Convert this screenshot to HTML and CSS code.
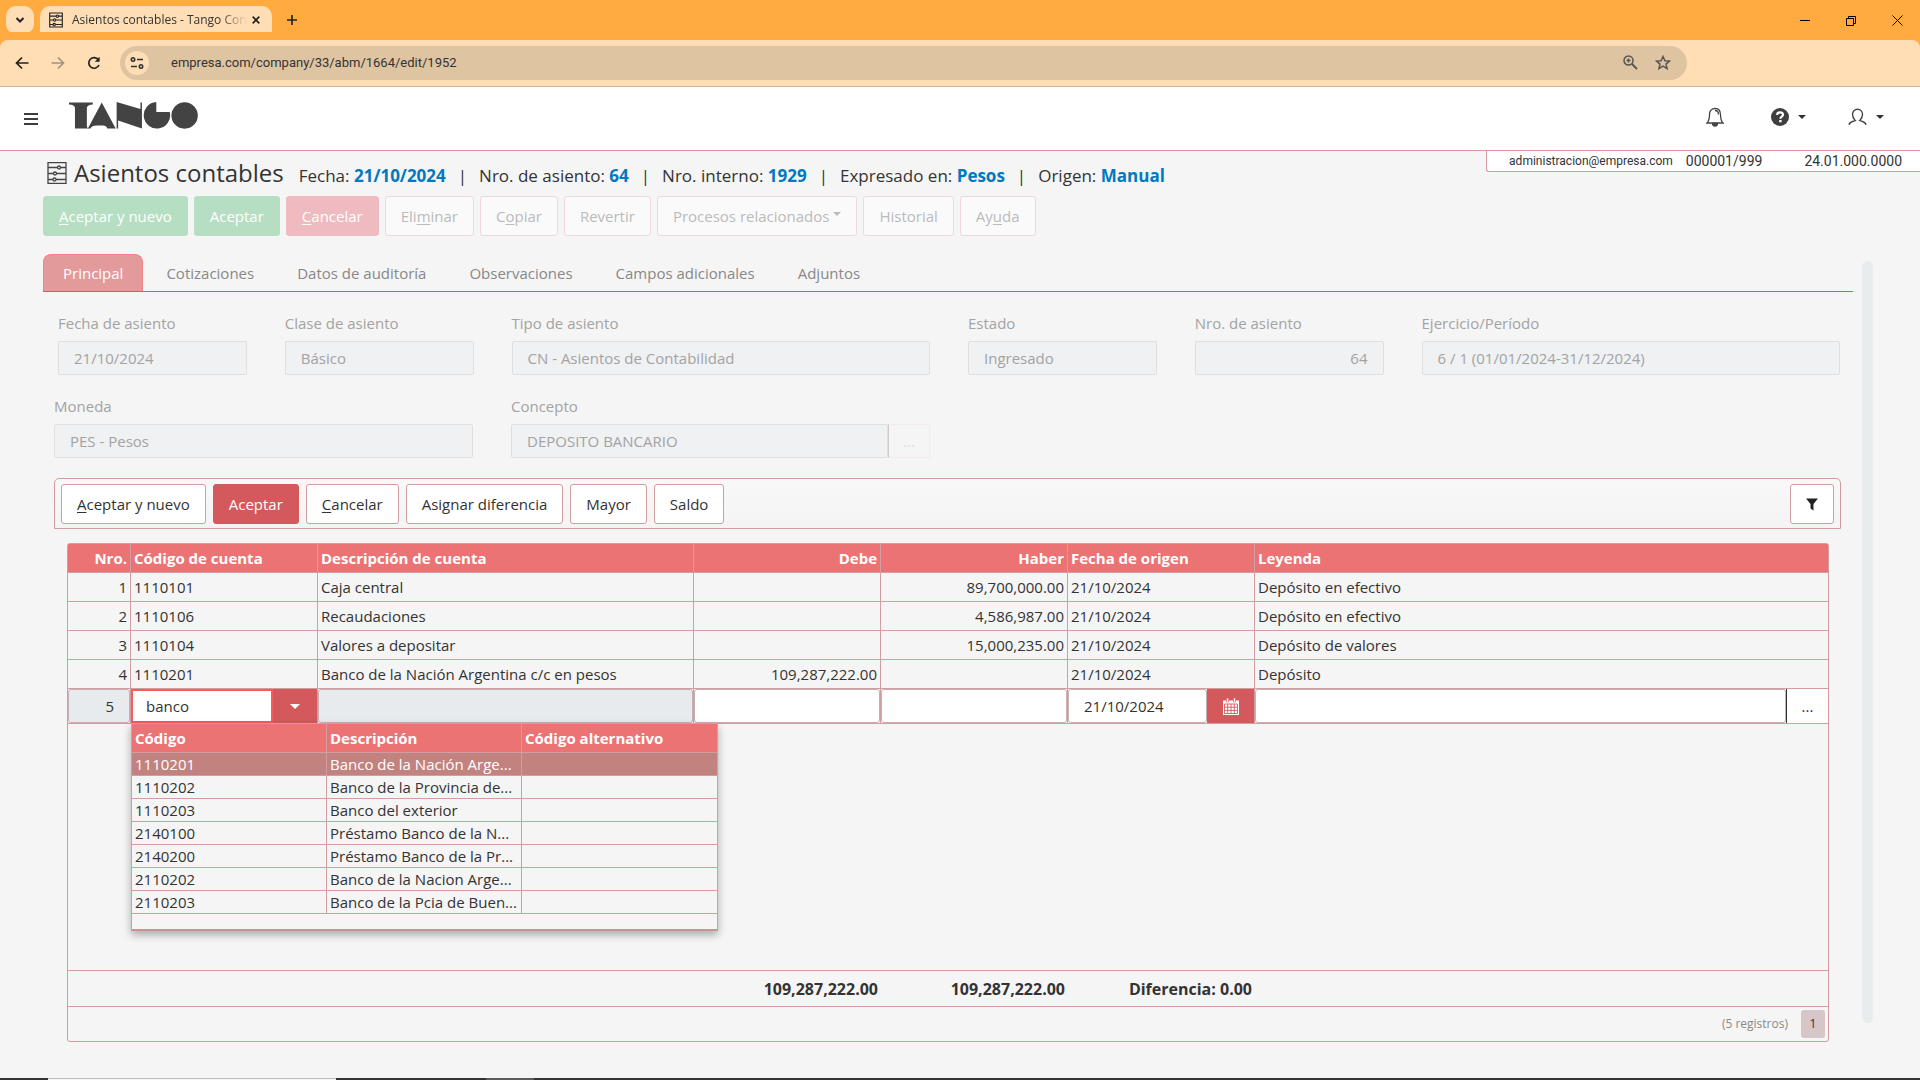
FILE: index.html
```html
<!doctype html>
<html lang="es">
<head>
    <meta charset="UTF-8">
    <meta name="viewport" content="width=device-width, initial-scale=1.0">
    <title>Asientos contables - Tango Contabilidad</title>
    <link rel="stylesheet" href="styles.css">
</head>
<body>
    <!-- browser frame -->
    <div class="tabstrip">
        <button class="tab-search" aria-label="Buscar pestañas">
            <svg width="10" height="10" viewBox="0 0 10 10"><path d="M1.5 3 5 6.5 8.5 3" fill="none" stroke="#222" stroke-width="2"/></svg>
        </button>
        <div class="browser-tab">
            <svg class="tab-icon" width="14" height="16" viewBox="0 0 20 22"><g fill="none" stroke="#222" stroke-width="1.6"><path d="M1 1h18v20H1zM1 5.500h18M1 11h18M1 17.500h18"/><g fill="#ffdeb5"><circle cx="12" cy="5.500" r="1.700"/><circle cx="8" cy="11" r="1.700"/><circle cx="7.500" cy="17.500" r="1.700"/></g></g></svg>
            <span class="tab-title">Asientos contables - Tango Con</span>
            <button class="tab-close" aria-label="Cerrar pestaña">
                <svg width="8" height="8" viewBox="0 0 8 8"><path d="M.7.7l6.600 6.600M7.300.7.7 7.300" stroke="#222" stroke-width="1.700"/></svg>
            </button>
        </div>
        <button class="new-tab" aria-label="Nueva pestaña">
            <svg width="12" height="12" viewBox="0 0 12 12"><path d="M6 1v10M1 6h10" stroke="#222" stroke-width="1.700"/></svg>
        </button>
        <div class="window-buttons">
            <button aria-label="Minimizar"><svg width="10" height="11" viewBox="0 0 10 11"><path d="M0 5.500h10" stroke="#000"/></svg></button>
            <button aria-label="Restaurar"><svg width="10" height="11" viewBox="0 0 10 11"><path d="M.5 3.500h7v7h-7zM2.500 3.500v-2h7v7h-2" fill="none" stroke="#000"/></svg></button>
            <button aria-label="Cerrar"><svg width="11" height="11" viewBox="0 0 11 11"><path d="M.5.5l10 10M10.500.5l-10 10" stroke="#000"/></svg></button>
        </div>
    </div>
    <div class="browser-bar">
        <button aria-label="Atrás"><svg width="14" height="14" viewBox="0 0 14 14"><path d="M13.500 7H2M7 1.500 1.500 7 7 12.500" fill="none" stroke="#222" stroke-width="1.700"/></svg></button>
        <button aria-label="Adelante"><svg width="14" height="14" viewBox="0 0 14 14"><path d="M.5 7H12M7 1.500 12.500 7 7 12.500" fill="none" stroke="#a4927c" stroke-width="1.700"/></svg></button>
        <button aria-label="Recargar"><svg width="14" height="14" viewBox="0 0 14 14"><path d="M12 9a5.300 5.300 0 1 1-.6-5.200" fill="none" stroke="#222" stroke-width="1.700"/><path d="M12.600.8v5H7.800z" fill="#222"/></svg></button>
        <div class="omnibox">
            <button class="site-info" aria-label="Información del sitio">
                <svg width="14" height="14" viewBox="0 0 14 14" fill="none" stroke="#333" stroke-width="1.600"><circle cx="3" cy="3.500" r="1.700"/><path d="M7 3.500h6M1 10.500h6"/><circle cx="11" cy="10.500" r="1.700"/></svg>
            </button>
            <input class="url" type="text" aria-label="Dirección" value="empresa.com/company/33/abm/1664/edit/1952">
            <button aria-label="Zoom"><svg width="15" height="15" viewBox="0 0 15 15" fill="none" stroke="#555"><circle cx="5.500" cy="5.500" r="4.500" stroke-width="1.500"/><path d="M9 9l5 5" stroke-width="1.800"/><path d="M5.500 3.500v4M3.500 5.500h4" stroke-width="1.500"/></svg></button>
            <button aria-label="Favorito"><svg width="16" height="15" viewBox="0 0 16 15"><path d="M8 1.500l1.900 4.200 4.600.4-3.500 3 1.100 4.500L8 11.200l-4.100 2.400L5 9.100 1.500 6.100l4.600-.4z" fill="none" stroke="#555" stroke-width="1.500"/></svg></button>
        </div>
    </div>

    <header class="app-header">
        <button class="menu" aria-label="Menú">
            <svg width="14" height="12" viewBox="0 0 14 12"><path d="M0 1h14M0 6h14M0 11h14" stroke="#3c3c3c" stroke-width="2"/></svg>
        </button>
        <!-- Tango logo -->
        <svg class="logo" role="img" aria-label="Tango" width="129" height="27" viewBox="0 0 130 27" fill="#434343">
            <path d="M0 .5h24v2q-5 0-6 3v18q0 2.500 1.500 3H6V5.500Q5 2.500 0 2.500z"/>
            <path d="M33 .5l14 26H38.500Q38 23.500 34 23.500h-6q-5 0-6.500 3H19z"/>
            <path d="M48 0l24 7V.5h1.500v26L49.500 18.500v8H48z"/>
            <path d="M88 0v10h13.500A13.300 13.300 0 1 1 88 0z"/>
            <circle cx="116.500" cy="13.500" r="13.300"/>
        </svg>
        <nav class="header-icons">
            <button aria-label="Notificaciones">
                <svg width="18" height="20" viewBox="0 0 18 20" fill="none" stroke="#444" stroke-width="1.300"><path d="M1 16c2-2 2.500-4 2.500-8.500C3.500 3.500 6 1.500 9 1.500s5.500 2 5.500 6c0 4.500.5 6.500 2.500 8.500z"/><path d="M9 3.500c2 0 3.500 1.200 3.500 4"/><path d="M6.500 16.500a2.500 2.500 0 0 0 5 0z" fill="#444"/></svg>
            </button>
            <button aria-label="Ayuda">
                <svg width="18" height="18" viewBox="0 0 18 18"><circle cx="9" cy="9" r="9" fill="#3f3f3f"/><path d="M6 6.800C6.200 5 7.400 4.300 9 4.300c1.800 0 3 .9 3 2.400 0 2-2.600 1.900-2.600 4" fill="none" stroke="#fff" stroke-width="2.200"/><rect x="8.200" y="12" width="2.400" height="2.300" fill="#fff"/></svg>
                <span class="caret"></span>
            </button>
            <button aria-label="Usuario">
                <svg width="19" height="18" viewBox="0 0 19 18"><path d="M1 16.800c.5-2.300 2-3.100 6.200-4.300C5 10.500 4.500 9 4.500 6.500 4.500 3.300 6.700 1.200 9.500 1.200s5 2.100 5 5.300c0 2.500-.5 4-2.700 6 4.200 1.200 5.700 2 6.200 4.300" fill="none" stroke="#444" stroke-width="1.400"/></svg>
                <span class="caret"></span>
            </button>
        </nav>
    </header>

    <main class="page">
        <div class="session">
            <span>administracion@empresa.com</span>
            <span class="company">000001/999</span>
            <span class="version">24.01.000.0000</span>
        </div>

        <div class="title-row">
            <svg width="20" height="22" viewBox="0 0 20 22"><g fill="none" stroke="#444" stroke-width="1.300"><path d="M1 .7h18v20.600H1zM1 5.500h18M1 11.500h18M1 17.500h18"/><g fill="#f5f5f5"><circle cx="12" cy="5.500" r="1.500"/><circle cx="8" cy="11.500" r="1.500"/><circle cx="7.500" cy="17.500" r="1.500"/></g></g></svg>
            <h1>Asientos contables</h1>
            <p class="info">
                <span>Fecha: <b>21/10/2024</b></span><i>|</i>
                <span>Nro. de asiento: <b>64</b></span><i>|</i>
                <span>Nro. interno: <b>1929</b></span><i>|</i>
                <span>Expresado en: <b>Pesos</b></span><i>|</i>
                <span>Origen: <b>Manual</b></span>
            </p>
        </div>

        <div class="actions">
            <button class="btn green" disabled><u>A</u>ceptar y nuevo</button>
            <button class="btn green" disabled>Aceptar</button>
            <button class="btn pink" disabled><u>C</u>ancelar</button>
            <button class="btn" disabled>Eli<u>m</u>inar</button>
            <button class="btn" disabled>C<u>o</u>piar</button>
            <button class="btn" disabled>Revertir</button>
            <button class="btn" disabled>Procesos relacionados<span class="caret"></span></button>
            <button class="btn" disabled>Historial</button>
            <button class="btn" disabled>Ay<u>u</u>da</button>
        </div>

        <div class="content">
            <div class="tabs">
                <a class="active" href="#">Principal</a>
                <a href="#">Cotizaciones</a>
                <a href="#">Datos de auditoría</a>
                <a href="#">Observaciones</a>
                <a href="#">Campos adicionales</a>
                <a href="#">Adjuntos</a>
            </div>

            <form class="fields">
                <div class="row">
                    <div class="field"><label for="fecha">Fecha de asiento</label><input id="fecha" type="text" value="21/10/2024" disabled></div>
                    <div class="field"><label for="clase">Clase de asiento</label><input id="clase" type="text" value="Básico" disabled></div>
                    <div class="field"><label for="tipo">Tipo de asiento</label><input id="tipo" type="text" value="CN - Asientos de Contabilidad" disabled></div>
                    <div class="field"><label for="estado">Estado</label><input id="estado" type="text" value="Ingresado" disabled></div>
                    <div class="field"><label for="nro">Nro. de asiento</label><input id="nro" class="num" type="text" value="64" disabled></div>
                    <div class="field"><label for="ejercicio">Ejercicio/Período</label><input id="ejercicio" type="text" value="6 / 1 (01/01/2024-31/12/2024)" disabled></div>
                </div>
                <div class="row second">
                    <div class="field"><label for="moneda">Moneda</label><input id="moneda" type="text" value="PES - Pesos" disabled></div>
                    <div class="field">
                        <label for="concepto">Concepto</label>
                        <div class="input-group">
                            <input id="concepto" type="text" value="DEPOSITO BANCARIO" disabled>
                            <button type="button" disabled>...</button>
                        </div>
                    </div>
                </div>
            </form>

            <div class="grid-toolbar">
                <button class="btn"><u>A</u>ceptar y nuevo</button>
                <button class="btn red">Aceptar</button>
                <button class="btn"><u>C</u>ancelar</button>
                <button class="btn">Asignar diferencia</button>
                <button class="btn">Mayor</button>
                <button class="btn">Saldo</button>
                <button class="btn filter" aria-label="Filtrar">
                    <svg width="12" height="13" viewBox="0 0 12 13"><path d="M0 .5h12L7.500 6v6.500l-3-2V6z" fill="#222"/></svg>
                </button>
            </div>

            <div class="grid">
                <table class="entries">
                    <colgroup>
                        <col class="c-nro"><col class="c-mid"><col class="c-desc"><col class="c-mid"><col class="c-mid"><col class="c-mid"><col>
                    </colgroup>
                    <thead>
                        <tr>
                            <th class="num">Nro.</th>
                            <th>Código de cuenta</th>
                            <th>Descripción de cuenta</th>
                            <th class="num">Debe</th>
                            <th class="num">Haber</th>
                            <th>Fecha de origen</th>
                            <th>Leyenda</th>
                        </tr>
                    </thead>
                    <tbody>
                        <tr><td class="num">1</td><td>1110101</td><td>Caja central</td><td class="num"></td><td class="num">89,700,000.00</td><td>21/10/2024</td><td>Depósito en efectivo</td></tr>
                        <tr><td class="num">2</td><td>1110106</td><td>Recaudaciones</td><td class="num"></td><td class="num">4,586,987.00</td><td>21/10/2024</td><td>Depósito en efectivo</td></tr>
                        <tr><td class="num">3</td><td>1110104</td><td>Valores a depositar</td><td class="num"></td><td class="num">15,000,235.00</td><td>21/10/2024</td><td>Depósito de valores</td></tr>
                        <tr><td class="num">4</td><td>1110201</td><td>Banco de la Nación Argentina c/c en pesos</td><td class="num">109,287,222.00</td><td class="num"></td><td>21/10/2024</td><td>Depósito</td></tr>
                        <tr class="edit">
                            <td><input class="line-number" type="text" aria-label="Nro." value="5" disabled></td>
                            <td class="lookup">
                                <div class="editor">
                                    <input class="focused" type="text" aria-label="Código de cuenta" value="banco">
                                    <button class="pick" aria-label="Abrir lista"><span class="caret"></span></button>
                                </div>
                                <div class="dropdown">
                                    <table>
                                        <thead>
                                            <tr><th>Código</th><th>Descripción</th><th>Código alternativo</th></tr>
                                        </thead>
                                        <tbody>
                                            <tr class="selected"><td>1110201</td><td>Banco de la Nación Arge...</td><td></td></tr>
                                            <tr><td>1110202</td><td>Banco de la Provincia de...</td><td></td></tr>
                                            <tr><td>1110203</td><td>Banco del exterior</td><td></td></tr>
                                            <tr><td>2140100</td><td>Préstamo Banco de la N...</td><td></td></tr>
                                            <tr><td>2140200</td><td>Préstamo Banco de la Pr...</td><td></td></tr>
                                            <tr><td>2110202</td><td>Banco de la Nacion Arge...</td><td></td></tr>
                                            <tr><td>2110203</td><td>Banco de la Pcia de Buen...</td><td></td></tr>
                                        </tbody>
                                    </table>
                                </div>
                            </td>
                            <td><input type="text" aria-label="Descripción de cuenta" disabled></td>
                            <td><input type="text" aria-label="Debe"></td>
                            <td><input type="text" aria-label="Haber"></td>
                            <td>
                                <div class="editor">
                                    <input type="text" aria-label="Fecha de origen" value="21/10/2024">
                                    <button class="pick date" aria-label="Calendario">
                                        <svg width="16" height="17" viewBox="0 0 16 17"><path d="M0 2.500h16V17H0z" fill="#fff"/><path d="M3.500 0h2v4h-2zM10.500 0h2v4h-2z" fill="#fff" stroke="#d4595c" stroke-width=".6"/><path d="M1.500 6h13v9.500h-13zM4.700 6v9.500M8 6v9.500M11.300 6v9.500M1.500 9.200h13M1.500 12.400h13" fill="none" stroke="#d4595c" stroke-width=".9"/></svg>
                                    </button>
                                </div>
                            </td>
                            <td>
                                <div class="editor">
                                    <input type="text" aria-label="Leyenda">
                                    <button class="more" aria-label="Más">...</button>
                                </div>
                            </td>
                        </tr>
                    </tbody>
                </table>
                <div class="grid-space"></div>
                <div class="totals">
                    <span class="debe">109,287,222.00</span>
                    <span>109,287,222.00</span>
                    <span>Diferencia: 0.00</span>
                </div>
                <div class="pager">
                    <span>(5 registros)</span>
                    <button>1</button>
                </div>
            </div>
        </div>
        <div class="scroll-track"></div>
    </main>

    <div class="taskbar"><span class="search"></span><span class="task"></span></div>
</body>
</html>
```

FILE: styles.css
```css
* {
    box-sizing: border-box;
}
body {
    margin: 0;
    min-height: 100vh;
    display: flex;
    flex-direction: column;
    font-family: "Open Sans", "Noto Sans", sans-serif;
    font-size: 15px;
    line-height: 20px;
    color: #333;
    background: #f5f5f5;
}
button,
input {
    font: inherit;
    color: inherit;
}
button {
    padding: 0;
    border: 0;
    background: none;
    display: flex;
    align-items: center;
    justify-content: center;
}
svg {
    display: block;
    flex: none;
}
.caret {
    border: 4px solid transparent;
    border-top: 4px solid currentColor;
    border-bottom: 0;
}

/* browser frame */
.tabstrip {
    display: flex;
    align-items: center;
    height: 40px;
    padding-left: 6px;
    background: #ffab40;
}
.tab-search {
    width: 28px;
    height: 28px;
    border-radius: 10px;
    background: #ffdeb5;
}
.browser-tab {
    display: flex;
    align-items: center;
    align-self: flex-end;
    width: 232px;
    height: 34px;
    margin-left: 6px;
    padding: 0 12px 6px 9px;
    border-radius: 10px 10px 0 0;
    background: #ffdeb5;
}
.tab-title {
    flex: 1;
    margin-left: 9px;
    white-space: nowrap;
    font-size: 12px;
    -webkit-mask-image: linear-gradient(to right, #000 82%, transparent 97%);
    mask-image: linear-gradient(to right, #000 82%, transparent 97%);
}
.new-tab {
    width: 40px;
    height: 28px;
}
.window-buttons {
    display: flex;
    margin-left: auto;
}
.window-buttons button {
    width: 46px;
    height: 40px;
}
.browser-bar {
    display: flex;
    align-items: center;
    height: 47px;
    padding: 0 233px 1px 4px;
    border-bottom: 1px solid #cdb894;
    border-radius: 8px 8px 0 0;
    background: #ffdeb5;
    box-shadow: 0 -8px 0 #ffab40;
}
.browser-bar > button {
    width: 36px;
    height: 34px;
}
.omnibox {
    flex: 1;
    display: flex;
    align-items: center;
    gap: 17px;
    height: 34px;
    margin-left: 8px;
    padding: 0 16px 0 5px;
    border-radius: 17px;
    background: #dfc4a1;
}
.site-info {
    width: 24px;
    height: 24px;
    border-radius: 12px;
    background: #ffdeb5;
}
.url {
    flex: 1;
    border: 0;
    padding: 1px 5px 0;
    background: none;
    font-family: Roboto, sans-serif;
    font-size: 13px;
    outline: none;
}

/* application header */
.app-header {
    display: flex;
    align-items: center;
    height: 64px;
    padding: 0 36px 0 24px;
    border-bottom: 1px solid #d9989d;
    background: #fff;
}
.logo {
    margin: 0 auto 7px 31px;
}
.header-icons {
    display: flex;
    align-items: center;
    gap: 42px;
    padding-bottom: 3px;
}
.header-icons button {
    gap: 9px;
}
.header-icons button:first-child {
    margin-right: 5px;
}

.page {
    position: relative;
    flex: 1;
    display: flex;
    flex-direction: column;
    padding: 7px 67px 36px 43px;
}
.session {
    position: absolute;
    top: 0;
    right: 0;
    display: flex;
    padding: 0 18px 0 22px;
    border: 1px solid #d9989d;
    border-width: 0 0 1px 1px;
    border-radius: 0 0 0 3px;
    background: #fff;
    font-family: Roboto, sans-serif;
    font-size: 14px;
}
.session span:first-child {
    font-size: 12px;
}
.company {
    margin: 0 42px 0 13px;
}
.title-row {
    display: flex;
    align-items: baseline;
    height: 38px;
    padding-left: 4px;
}
.title-row svg {
    align-self: flex-start;
    margin-top: 4px;
}
h1 {
    margin: 0 15px 0 7px;
    font-size: 24px;
    font-weight: 500;
    line-height: 30px;
}
.info {
    display: flex;
    margin: 0;
    font-size: 17px;
}
.info b {
    color: #0079c1;
}
.info i {
    margin: 0 12px;
    font-style: normal;
}

.btn {
    height: 40px;
    padding: 0 15px;
    border: 1px solid #d19da0;
    border-radius: 3px;
    background: #fff;
    white-space: nowrap;
}
.btn u {
    text-underline-offset: 2px;
}
.actions {
    display: flex;
    gap: 6px;
}
.actions .btn {
    border-color: #efd9dc;
    background: #fafafa;
    color: #bbb;
}
.actions .btn.green,
.actions .btn.pink {
    border-color: #b6dec2;
    background: #b6dec2;
    color: #fff;
}
.actions .btn.pink {
    border-color: #efbbc0;
    background: #efbbc0;
}
.actions .caret {
    margin: 0 0 4px 4px;
}

/* tabs */
.content {
    flex: 1;
    display: flex;
    flex-direction: column;
}
.tabs {
    display: flex;
    gap: 3px;
    margin-top: 18px;
    border-bottom: 1px solid #d9595c;
}
.tabs a {
    padding: 9px 20px 8px;
    color: #888;
    text-decoration: none;
}
.tabs .active {
    border: 1px solid #f58285;
    border-bottom: 0;
    border-radius: 8px 8px 0 0;
    padding: 8px 19px;
    background: #e29a9b;
    color: #fff;
}

/* disabled header fields */
.fields {
    color: #a3a3a3;
}
.row {
    display: grid;
    grid-template-columns: 189fr 189fr 419fr 189fr 189fr 419fr;
    gap: 38px;
    padding: 21px 13px 0 15px;
}
.row.second {
    grid-template-columns: 419fr 419fr 872fr;
    padding: 21px 13px 0 11px;
}
.field {
    min-width: 0;
}
.field label {
    display: block;
    margin-bottom: 8px;
}
.field input {
    display: block;
    width: 100%;
    height: 34px;
    padding: 0 15px;
    border: 1px solid #dfdfdf;
    border-radius: 2px;
    background: #eff1f3;
}
.field .num {
    text-align: right;
}
.input-group {
    display: flex;
}
.input-group button {
    flex: none;
    width: 42px;
    height: 34px;
    border: 1px solid #f4ebeb;
    border-left: 1px solid #ccc;
    color: #ddd;
}

/* entries grid */
.grid-toolbar {
    display: flex;
    gap: 7px;
    margin: 20px 12px 0 11px;
    padding: 5px 6px 4px;
    border: 1px solid #d19da0;
    border-radius: 5px 5px 0 0;
    background: linear-gradient(#f8f8f8, #f4f4f4);
}
.btn.red {
    border-color: #d4595c;
    background: #d4595c;
    color: #fff;
}
.filter {
    width: 44px;
    margin-left: auto;
}
.grid {
    flex: 1;
    display: flex;
    flex-direction: column;
    margin: 14px 24px 0;
    border: 1px solid #d19da0;
    border-radius: 3px;
}
.grid table {
    width: 100%;
    border-spacing: 0;
    table-layout: fixed;
}
.c-nro {
    width: 63px;
}
.c-mid {
    width: 187px;
}
.c-desc {
    width: 376px;
}
.grid th,
.grid td {
    height: 29px;
    padding: 0 3px;
    border-right: 1px solid #d19da0;
    border-bottom: 1px solid #d19da0;
    text-align: left;
    white-space: nowrap;
}
.grid th {
    background: #eb7374;
    color: #fff;
}
.grid tr > :last-child {
    border-right: 0;
}
.grid .num {
    text-align: right;
}
.grid .edit > td {
    height: 35px;
    padding: 0;
}
.edit input {
    display: block;
    width: 100%;
    min-width: 0;
    height: 34px;
    padding: 0 15px;
    border: 1px solid #c9aeb0;
    border-radius: 3px;
    background: #fff;
    outline: none;
}
.edit input:disabled {
    background: #e7ebee;
}
.edit .line-number {
    text-align: right;
}
.edit .focused {
    border: 2px solid #fa5a5c;
    border-radius: 0;
    padding: 0 13px;
}
.editor {
    display: flex;
}
.editor input {
    flex: 1;
}
.pick {
    width: 44px;
    background: #d4595c;
    color: #fff;
}
.pick .caret {
    border-width: 5px 5px 0;
}
.pick.date {
    width: 47px;
}
.more {
    width: 42px;
    border-left: 1px solid #333;
    background: #fff;
}
.lookup {
    position: relative;
}
.dropdown {
    position: absolute;
    z-index: 1;
    top: 100%;
    left: 0;
    width: 587px;
    padding-bottom: 15px;
    border: 1px solid #c4a4a6;
    border-bottom: 2px solid #c99396;
    background: #f5f5f5;
    box-shadow: 0 4px 8px rgba(0, 0, 0, 0.3);
}
.grid .dropdown td {
    height: 23px;
}
.dropdown .selected td {
    background: #c28280;
    color: #fff;
}
.grid-space {
    flex: 1;
}
.totals {
    display: grid;
    grid-template-columns: 813px 187px 187px;
    align-items: center;
    height: 37px;
    border: 1px solid #d19da0;
    border-width: 1px 0;
    font-size: 16px;
    font-weight: bold;
    text-align: right;
}
.totals span {
    padding-right: 3px;
}
.pager {
    display: flex;
    align-items: center;
    justify-content: flex-end;
    gap: 13px;
    height: 34px;
    padding-right: 3px;
    color: #888;
    font-size: 12px;
}
.pager button {
    width: 24px;
    height: 28px;
    border-radius: 3px;
    background: #d6c6c8;
    color: #333;
}

.scroll-track {
    position: absolute;
    top: 110px;
    right: 47px;
    bottom: 55px;
    width: 11px;
    border-radius: 6px;
    background: #e8ecec;
}
.taskbar {
    display: flex;
    gap: 150px;
    height: 2px;
    padding-left: 48px;
    background: #333;
}
.search {
    width: 288px;
    border-top: 1px solid #bbb;
    background: #f5f5f5;
}
.task {
    width: 48px;
    background: #5c5c5c;
}
```
